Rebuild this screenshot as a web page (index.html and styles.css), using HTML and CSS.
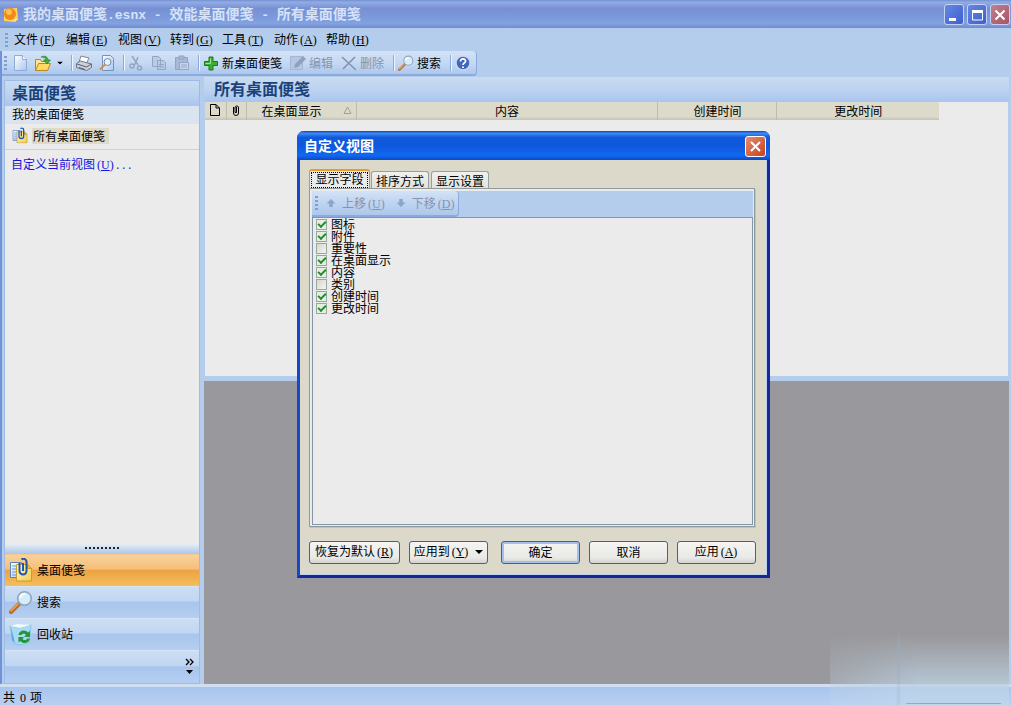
FILE: index.html
```html
<!DOCTYPE html>
<html lang="zh-CN">
<head>
<meta charset="utf-8">
<title>我的桌面便笺.esnx - 效能桌面便笺 - 所有桌面便笺</title>
<link rel="stylesheet" href="styles.css">
</head>
<body>
<svg class="defs" aria-hidden="true">
  <defs>
    <linearGradient id="gold" x1="0" y1="0" x2="1" y2="1"><stop offset="0" stop-color="#fffbd0"/><stop offset="1" stop-color="#f3c94c"/></linearGradient>
    <linearGradient id="paper" x1="0" y1="0" x2="1" y2="1"><stop offset="0" stop-color="#fff"/><stop offset="1" stop-color="#a9c6ee"/></linearGradient>
    <symbol id="i-notes" viewBox="0 0 24 24">
      <path d="M1.500 4.500h11v15h-11z" fill="url(#paper)" stroke="#5b83c4"/>
      <path d="M3 8h5M3 11h5M3 14h5M3 17h5" stroke="#6f93cf"/>
      <path d="M7.500 6.500h11l4 4v12.500h-15z" fill="url(#gold)" stroke="#c99f26"/>
      <path d="M18.500 6.500v4h4z" fill="#f0b92e" stroke="#c99f26"/>
      <path d="M10.500 5v8a3.500 3.500 0 0 0 7 0V4a3 3 0 0 0-5-2.500M14 5v8" fill="none" stroke="#2456a8" stroke-width="2"/>
    </symbol>
    <symbol id="i-search" viewBox="0 0 24 24">
      <path d="M2 22l8-8" stroke="#b86a2c" stroke-width="4" stroke-linecap="round"/>
      <path d="M2 21l7-7" stroke="#f0a662" stroke-width="1.600" stroke-linecap="round"/>
      <circle cx="15.500" cy="8.500" r="6.800" fill="#d5ecfa" stroke="#8fa5bd" stroke-width="1.600"/>
      <path d="M11 8a5 5 0 0 1 5-4" fill="none" stroke="#fff" stroke-width="2"/>
    </symbol>
    <symbol id="arrow-down" viewBox="0 0 8 4"><path d="M0 0h8l-4 4z" fill="#000"/></symbol>
  </defs>
</svg>

<header class="titlebar">
  <svg class="app-icon" viewBox="0 0 16 16"><path d="M1 2l13-1 1 11-3 3-11-1z" fill="#ffd35a"/><circle cx="7" cy="7" r="6" fill="#f28a1c"/><circle cx="6" cy="5" r="3" fill="#ffc14d"/><path d="M11 15l1-3h3z" fill="#fff1b0"/></svg>
  <h1 class="title">我的桌面便笺<span class="mono">.esnx - </span>效能桌面便笺<span class="mono"> - </span>所有桌面便笺</h1>
  <button class="win-btn" aria-label="最小化"><svg viewBox="0 0 18 18"><path d="M4 12h7v3H4z" fill="#fff"/></svg></button>
  <button class="win-btn" aria-label="最大化"><svg viewBox="0 0 18 18"><path d="M4.500 5h10v9h-10z" fill="none" stroke="#fff"/><path d="M4 4h11v3H4z" fill="#fff"/></svg></button>
  <button class="win-btn win-close" aria-label="关闭"><svg viewBox="0 0 18 18"><path d="M4.500 4.500l9 9M13.500 4.500l-9 9" stroke="#fff" stroke-width="2"/></svg></button>
</header>

<nav class="menubar">
  <i class="grip"></i>
  <button>文件<span class="key">(<u>F</u>)</span></button>
  <button>编辑<span class="key">(<u>E</u>)</span></button>
  <button>视图<span class="key">(<u>V</u>)</span></button>
  <button>转到<span class="key">(<u>G</u>)</span></button>
  <button>工具<span class="key">(<u>T</u>)</span></button>
  <button>动作<span class="key">(<u>A</u>)</span></button>
  <button>帮助<span class="key">(<u>H</u>)</span></button>
</nav>

<div class="toolbar-row">
<div class="toolbar">
  <i class="grip"></i>
  <button aria-label="新建"><svg viewBox="0 0 16 16"><path d="M2.500 .5h8l4 4v11h-12z" fill="url(#paper)" stroke="#8fabd6"/><path d="M10.500 .5v4h4" fill="#fff" stroke="#8fabd6"/></svg></button>
  <button class="open" aria-label="打开"><svg viewBox="0 0 16 16"><path d="M.5 15V4.500h5l1 2h6V9" fill="#ffe693" stroke="#b58a1c"/><path d="M.5 15.500l3-7h12l-3 7z" fill="#ffd961" stroke="#b58a1c"/><path d="M6 2c4-2 7 0 7 3h2.500L12 9 8.500 5H11c-.5-2-2-3-5-3z" fill="#3fae3a" stroke="#237a26" stroke-width=".6"/></svg><svg class="caret" viewBox="0 0 8 4"><use href="#arrow-down"/></svg></button>
  <i class="sep"></i>
  <button aria-label="打印"><svg viewBox="0 0 16 16"><path d="M5 1l8 2-3 6-7-2z" fill="#fff" stroke="#7d8796"/><path d="M.5 8.500l4-2.500 11 3v3.500l-5 3-10-3z" fill="#cdd3dc" stroke="#6b7482"/><path d="M1 9l9.500 3 5-3M3 12.500l6 2" fill="none" stroke="#555e6b"/></svg></button>
  <button aria-label="打印预览"><svg viewBox="0 0 16 16"><path d="M3.500 .5h8l3 3v12h-11z" fill="url(#paper)" stroke="#7292c2"/><circle cx="8.500" cy="7" r="3.500" fill="#e4f3fd" stroke="#7288a5"/><path d="M6 9.500l-5 5" stroke="#d98b45" stroke-width="2"/></svg></button>
  <i class="sep"></i>
  <button disabled aria-label="剪切"><svg viewBox="0 0 16 16" fill="none" stroke="#93a5c2" stroke-width="1.500"><path d="M4 1l6 9M10 2L7 9l-1 1"/><circle cx="4" cy="11" r="2"/><circle cx="11.500" cy="13" r="2"/></svg></button>
  <button disabled aria-label="复制"><svg viewBox="0 0 16 16" fill="#b9cbe6" stroke="#93a5c2"><path d="M1.500 1.500h6l2 2v8h-8zM6.500 5.500h6l2 2v7h-8z"/><path d="M8 9.500h5M8 12h5"/></svg></button>
  <button disabled aria-label="粘贴"><svg viewBox="0 0 16 16" fill="#a7b9d6" stroke="#93a5c2"><path d="M1.500 2.500h12v12h-12z"/><path d="M5 1h5v3H5z"/><path d="M5.500 7.500h9v7h-9zM7 10h6M7 12h6" fill="#c8d7ed"/></svg></button>
  <i class="sep"></i>
  <button class="labelled"><svg viewBox="0 0 16 16"><path d="M6 2h4v4.500h4.500v4H10V15H6v-4.500H1.500v-4H6z" fill="#39b02f" stroke="#1a7a18"/><path d="M7.500 3.500v5h-5" fill="none" stroke="#9be88c"/></svg>新桌面便笺</button>
  <button class="labelled" disabled><svg viewBox="0 0 16 16"><path d="M.5 1.500h12v13H.5z" fill="#b5c7e3" stroke="#a5b7d3"/><path d="M4 13l1-4 8-8 3 3-8 8z" fill="#8fa1bd"/></svg>编辑</button>
  <button class="labelled" disabled><svg viewBox="0 0 16 16"><path d="M1 2l14 13M14 2L2 14" stroke="#8294b2" stroke-width="1.600"/></svg>删除</button>
  <i class="sep"></i>
  <button class="labelled"><svg viewBox="0 0 24 24"><use href="#i-search"/></svg>搜索</button>
  <i class="sep"></i>
  <button aria-label="帮助"><svg viewBox="0 0 16 16"><circle cx="8" cy="8" r="7" fill="#4166ba" stroke="#c8d8f2" stroke-width="1.500"/><path d="M5.500 6.500c0-4 5.500-3 5 0C10 8 8 8 8 10M8 11.500v1.500" fill="none" stroke="#fff" stroke-width="1.800"/></svg></button>
</div>
</div>

<main class="workspace">
  <aside class="sidebar">
    <h2 class="pane-title">桌面便笺</h2>
    <p class="group">我的桌面便笺</p>
    <a class="view" href="#"><svg viewBox="0 0 24 24"><use href="#i-notes"/></svg><span>所有桌面便笺</span></a>
    <a class="customize" href="#">自定义当前视图<span class="key">(<u>U</u>)</span><span class="dots">...</span></a>
    <div class="splitter"><i></i></div>
    <button class="nav active"><svg viewBox="0 0 24 24"><use href="#i-notes"/></svg>桌面便笺</button>
    <button class="nav"><svg viewBox="0 0 24 24"><use href="#i-search"/></svg>搜索</button>
    <button class="nav"><svg viewBox="0 0 24 24"><path d="M1 4l10 2 11-3-2 18-9 2-7-2z" fill="#a9daf4" stroke="#8cc3e2"/><path d="M1 4l7-2 14 1-11 3z" fill="#eefaff"/><path d="M2 5l4 16-3-3z" fill="#5aa6e2"/><path d="M9.500 13c.5-5 7-6 9.500-2.500L21 9v6h-6l2-2c-1.500-2-4-1.500-4.500 0zM21 16.500c-1 5-7 6-9.500 2.500l-2 1.500V15H15l-1.500 2c1.500 2 4 1 4.500-.5z" fill="#23963a"/></svg>回收站</button>
    <div class="nav-more"><button aria-label="配置按钮"><svg viewBox="0 0 9 16"><path d="M1 1l3 3-3 3M5 1l3 3-3 3" fill="none" stroke="#000" stroke-width="1.300"/><path d="M1 12h7l-3.500 4z"/></svg></button></div>
  </aside>
  <section class="content">
    <h2 class="pane-title">所有桌面便笺</h2>
    <div class="list">
      <table>
        <colgroup><col class="c-icon"><col class="c-clip"><col class="c-desk"><col><col class="c-created"><col class="c-changed"></colgroup>
        <thead><tr>
          <th aria-label="图标"><svg class="h-icon" viewBox="0 0 12 14"><path d="M1.500 1.500h5.500l3.500 3.500v7.500h-9zM7 1.500V5h3.500" fill="none" stroke="#000"/></svg></th>
          <th aria-label="附件"><svg class="h-icon" viewBox="0 0 12 14"><path d="M3.500 4v6a2.500 2.500 0 0 0 5 0V4a2 2 0 0 0-3.500 0v5.500h1.500V4" fill="none" stroke="#000"/></svg></th>
          <th><span class="sorted">在桌面显示<svg viewBox="0 0 9 8"><path d="M4.500 1L8 7.500H1z" fill="none" stroke="#a3a08e"/></svg></span></th>
          <th>内容</th><th>创建时间</th><th>更改时间</th>
        </tr></thead>
      </table>
    </div>
    <div class="preview"></div>
  </section>
</main>

<footer class="status">共<span class="key"> 0 </span>项</footer>
<div class="haze"></div>

<div class="dialog" role="dialog" aria-labelledby="dlg-title">
  <div class="dlg-head"><h2 id="dlg-title">自定义视图</h2>
    <button class="dlg-close" aria-label="关闭"><svg viewBox="0 0 19 19"><path d="M5 5l9 9M14 5l-9 9" stroke="#fff" stroke-width="2"/></svg></button></div>
  <div class="dlg-body">
    <div class="tabs" role="tablist">
      <button role="tab" aria-selected="true" class="tab selected"><span>显示字段</span></button>
      <button role="tab" aria-selected="false" class="tab">排序方式</button>
      <button role="tab" aria-selected="false" class="tab">显示设置</button>
    </div>
    <div class="panel">
      <div class="move-row"><div class="move-bar">
        <i class="grip"></i>
        <button disabled><svg viewBox="0 0 10 10"><path d="M5 0l5 5H7v4H3V5H0z" fill="#8ba5cd"/></svg><span>上移<span class="key">(<u>U</u>)</span></span></button>
        <button disabled><svg viewBox="0 0 10 10"><path d="M5 9L0 4h3V0h4v4h3z" fill="#8ba5cd"/></svg><span>下移<span class="key">(<u>D</u>)</span></span></button>
      </div></div>
      <div class="fields">
        <label><input type="checkbox" checked>图标</label>
        <label><input type="checkbox" checked>附件</label>
        <label><input type="checkbox">重要性</label>
        <label><input type="checkbox" checked>在桌面显示</label>
        <label><input type="checkbox" checked>内容</label>
        <label><input type="checkbox">类别</label>
        <label><input type="checkbox" checked>创建时间</label>
        <label><input type="checkbox" checked>更改时间</label>
      </div>
    </div>
    <div class="actions">
      <button class="reset">恢复为默认<span class="key">(<u>R</u>)</span></button>
      <button class="apply-to"><span>应用到<span class="key">(<u>Y</u>)</span></span><svg class="caret" viewBox="0 0 8 4"><use href="#arrow-down"/></svg></button>
      <button class="ok">确定</button>
      <button>取消</button>
      <button>应用<span class="key">(<u>A</u>)</span></button>
    </div>
  </div>
</div>
</body>
</html>
```
FILE: styles.css
```css
* { box-sizing: border-box; }
html, body { height: 100%; margin: 0; }
body {
  display: flex; flex-direction: column; overflow: hidden;
  background: #b5cdec; color: #000;
  font: 12px/16px "Noto Sans CJK SC", sans-serif;
}
button { font: inherit; color: inherit; border: 0; background: none; padding: 0; margin: 0; white-space: nowrap; }
h1, h2, p { margin: 0; }
svg { display: block; flex: none; }
.defs { position: absolute; width: 0; height: 0; }
.key { font-family: "Liberation Serif", serif; padding: 0 1px 0 2px; white-space: pre; }
.dots { font-family: "Liberation Mono", monospace; font-size: 10px; }
.mono { font-family: "Liberation Mono", monospace; font-size: 13px; white-space: pre; }
.grip { width: 3px; height: 14px; flex: none; background: repeating-linear-gradient(#7f9fd2 0 2px, transparent 2px 4px); }
.caret { width: 7px; height: 4px; }

.titlebar {
  height: 28px; flex: none; display: flex; align-items: center; gap: 3px; padding: 1px 1px 0 3px;
  background: linear-gradient(#7590d4, #91ace4 8%, #7890d3 30%, #7a97da 55%, #82a2e0 85%, #7189cd);
}
.app-icon { width: 16px; height: 16px; }
.title { flex: 1; padding-left: 1px; font-size: 14px; line-height: 20px; font-weight: 700; color: #d5e2f8; white-space: nowrap; }
.win-btn { width: 20px; height: 21px; border: 1px solid #c3d2f4; border-radius: 3px; background: linear-gradient(135deg, #6688e0, #3c5fcf); }
.win-btn svg { width: 18px; height: 18px; }
.win-close { background: linear-gradient(135deg, #c08090, #a85560); }

.menubar { height: 23px; flex: none; display: flex; align-items: center; gap: 10px; padding-left: 5px; }
.menubar button { width: 42px; text-align: left; }
.menubar .grip { margin-right: -4px; }
.toolbar-row { display: flex; flex: none; height: 29px; align-items: flex-start; border-left: 2px solid #6f93d6; }
.toolbar {
  height: 25px; display: flex; align-items: center; gap: 1px; padding: 0 2px;
  border: solid #8cabdd; border-width: 0 1px 2px 0; border-radius: 0 4px 4px 0;
  background: linear-gradient(#d3e2f6, #c5d9f3 50%, #adc7ec);
}
.toolbar .grip { margin-right: 1px; }
.toolbar button { display: flex; align-items: center; gap: 3px; padding: 0 3px; height: 20px; }
.toolbar .labelled { padding-right: 4px; }
.toolbar svg { width: 16px; height: 16px; }
.toolbar .open { gap: 6px; }
.toolbar .caret { width: 6px; height: 4px; }
.toolbar .sep { width: 2px; height: 16px; margin: 0 -1px 0 4px; border-left: 1px solid #8dabda; border-right: 1px solid #eef5ff; }
button:disabled { color: #8494ae; }

.workspace { flex: 1; min-height: 0; display: flex; gap: 4px; padding: 0 2px 0 2px; border-left: 2px solid #6f93d6; }
.sidebar { width: 196px; flex: none; display: flex; flex-direction: column; background: #ebebeb; border: 1px solid #9ebbe5; }
.pane-title {
  height: 25px; flex: none; padding: 0 10px; font-size: 16px; line-height: 23px; font-weight: 700; color: #1b4379;
  background: linear-gradient(#cadcf0, #b9d0f0 60%, #a9c5ee); white-space: nowrap;
}
.sidebar .pane-title { padding: 0 7px; }
.group { height: 18px; flex: none; padding: 0 7px; line-height: 16px; background: #dae3f0; }
.view { display: flex; align-items: center; gap: 4px; padding: 0 7px 2px; height: 26px; flex: none; color: inherit; text-decoration: none; border-bottom: 1px solid #c6d3e6; }
.view svg { width: 16px; height: 17px; }
.view span { background: #dfdac8; padding: 0 4px 0 1px; }
.customize { padding: 6px; color: #1414d8; text-decoration: none; flex: 1; }
.splitter { height: 10px; display: flex; justify-content: center; align-items: center; background: linear-gradient(#e8edf4, #a9c6ec); }
.splitter i { width: 35px; height: 2px; margin-bottom: 2px; background: repeating-linear-gradient(90deg, #223 0 2px, transparent 2px 4px); }
.nav, .nav-more {
  height: 32px; flex: none; display: flex; align-items: center; gap: 4px; padding: 0 4px 2px; text-align: left;
  border-top: 1px solid #d5e4f6;
  background: linear-gradient(#cddef4, #c0d6f2 45%, #a9c5ec 50%, #b5cff2);
}
.nav svg { width: 24px; height: 24px; }
.nav.active { border-top-color: #f4c88b; background: linear-gradient(#f8d29e, #f5be78 45%, #eca243 50%, #f4bf5d); }
.nav-more { height: 33px; justify-content: flex-end; padding-right: 5px; }
.nav-more svg { width: 9px; height: 16px; }

.content { flex: 1; min-width: 0; display: flex; flex-direction: column; margin-top: -3px; }
.list { flex: 0 1 275px; background: #ebebeb; border: 1px solid #b5cdec; border-top: 0; }
.list table { width: 91.4%; table-layout: fixed; border-collapse: collapse; }
th { height: 18px; padding: 0 0 2px; font-weight: 400; line-height: 15px; background: linear-gradient(#dcdacb 80%, #c5c3b3); border-right: 1px solid #bebcab; white-space: nowrap; }
th:last-child { border-right: 0; }
.c-icon { width: 21px; }
.c-clip { width: 20px; }
.c-desk { width: 110px; }
.c-created { width: 119px; }
.c-changed { width: 162px; }
.h-icon { width: 12px; height: 14px; margin: 0 auto; }
.sorted { display: flex; align-items: center; justify-content: space-between; padding: 0 4px 0 15px; }
.sorted svg { width: 9px; height: 8px; }
.preview { flex: 1; margin-top: 4px; background: #99989c; }

.status { height: 21px; flex: none; padding: 2px 3px 0; line-height: 16px; border-top: 3px solid #cfdff1; background: linear-gradient(#a9c5ee, #b9cff1); white-space: nowrap; }
.haze {
  position: absolute; right: 2px; bottom: 0; width: 179px; height: 71px;
  background:
    linear-gradient(90deg, transparent 37%, rgba(150, 175, 205, .35) 38%, transparent 40%),
    linear-gradient(90deg, transparent 42%, #8ba9d0 43% 95%, transparent 96%) 0 69px / 100% 1px no-repeat,
    linear-gradient(rgba(188, 208, 224, 0), rgba(188, 208, 224, .75) 65%, #bdd5ef);
  -webkit-mask-image: linear-gradient(90deg, rgba(0, 0, 0, .4), #000 50%);
  mask-image: linear-gradient(90deg, rgba(0, 0, 0, .4), #000 50%);
}

.dialog { position: absolute; left: 297px; top: 131px; width: 473px; border: solid #1648cc; border-width: 0 3px 3px; border-right-color: #14289c; border-bottom-color: #14289c; border-radius: 7px 7px 0 0; background: #ddd9ca; }
.dlg-head {
  height: 29px; margin: 0 -3px; padding: 1px 4px 0 7px; display: flex; align-items: center; justify-content: space-between;
  border-radius: 7px 7px 0 0; background: linear-gradient(#0d45bd, #3f8cf3 8%, #1058dc 22%, #0f58dc 50%, #1068f2 85%, #0c48c4);
}
.dlg-head h2 { font-size: 14px; line-height: 18px; padding-bottom: 2px; color: #fff; }
.dlg-close { width: 21px; height: 21px; border: 1px solid #fff; border-radius: 3px; background: linear-gradient(135deg, #e88a70, #c8421e); }
.dlg-close svg { width: 19px; height: 19px; }
.dlg-body { padding: 9px 11px 10px 9px; border: solid #bcd1f2; border-width: 0 1px 1px 0; }
.tabs { display: flex; align-items: flex-end; gap: 2px; height: 19px; }
.tab { width: 58px; height: 17px; border: 1px solid #93a0a6; border-bottom: 0; border-radius: 3px 3px 0 0; background: linear-gradient(#f1f1ee, #e2e2dc); line-height: 15px; }
.tab.selected { width: 61px; height: 19px; margin-right: -1px; border-top: 2px solid #eb9a2b; background: #ebebeb; padding: 0 1px; }
.tab.selected span { display: block; border: 1px dotted #000; line-height: 12px; height: 16px; }
.panel { border: 1px solid #8d9a9f; padding: 2px 1px 1px 2px; background: #ebebeb; box-shadow: 1px 1px 0 #c4c2b4; }
.move-row { height: 26px; background: #b5cdec; }
.move-bar { width: 147px; height: 26px; display: flex; align-items: center; padding-left: 3px; border: solid #8cabdd; border-width: 0 1px 2px 0; border-radius: 0 4px 4px 0; background: linear-gradient(#d3e2f6, #bfd4f1 50%, #adc7ec); }
.move-bar button { display: flex; align-items: center; gap: 6px; padding: 0 4px 0 8px; }
.move-bar svg { width: 10px; height: 9px; }
.move-bar button + button { padding-left: 6px; }
.fields { height: 308px; padding: 0 3px; border: 1px solid #8296a6; }
.fields label { display: flex; align-items: center; gap: 4px; height: 12px; line-height: 12px; }
.fields input { appearance: none; margin: 0; width: 11px; height: 11px; border: 1px solid #96a99a; background: linear-gradient(135deg, #d8d8d0, #f4f4f0); }
.fields input:checked { display: grid; place-items: center; background: #e4efe0; }
.fields input:checked::after { content: ""; width: 6px; height: 3px; border: solid #258a36; border-width: 0 0 2px 2px; transform: rotate(-45deg); margin-bottom: 2px; }
.actions { display: flex; gap: 9px; margin: 14px -1px 0 0; }
.actions button { flex: 1 1 79px; height: 23px; border: 1px solid #3c668c; border-radius: 3px; background: linear-gradient(#f4f4f2, #e9e9e6 75%, #d2d2ca); line-height: 16px; padding-bottom: 2px; }
.actions .reset { flex: 1 1 91px; }
.actions .apply-to { display: flex; align-items: center; justify-content: center; margin-right: 4px; }
.actions .caret { margin-left: 6px; width: 8px; }
.actions .ok { box-shadow: inset 0 0 0 2px #a3bfec; }
```
